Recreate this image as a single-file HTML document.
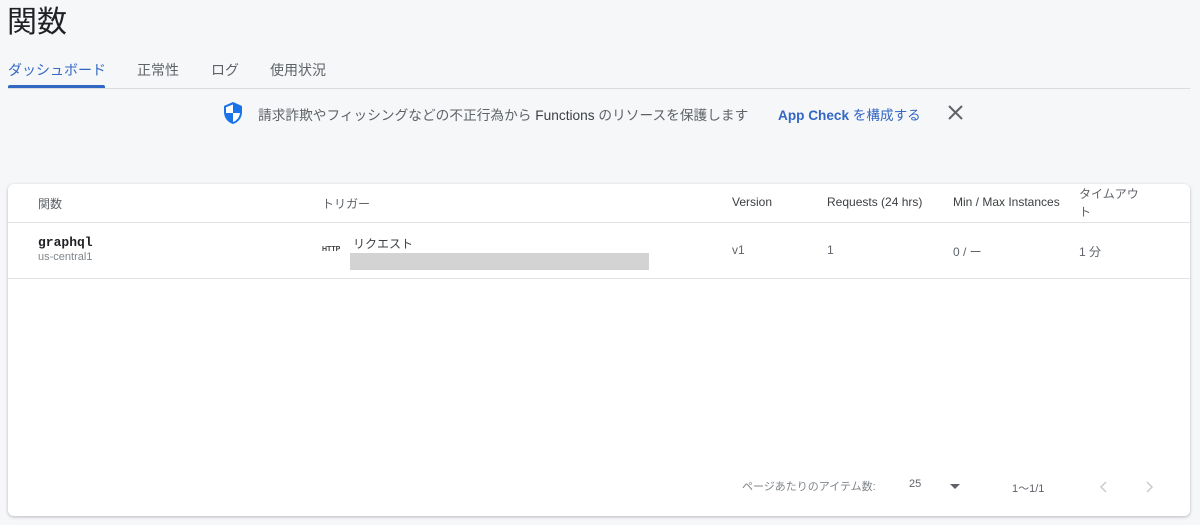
<!DOCTYPE html>
<html><head><meta charset="utf-8"><style>
*{margin:0;padding:0;box-sizing:border-box}
body{width:1200px;height:525px;background:#f6f7f9;font-family:"Liberation Sans","Noto Sans CJK JP",sans-serif;color:#3c4043;position:relative;overflow:hidden}
.a{position:absolute;white-space:nowrap}
</style></head><body>
<div class="a" style="left:7px;top:3px;font-size:30px;color:#202124;line-height:40px">関数</div>
<div class="a" style="left:8px;top:60px;font-size:14px;color:#3367c4">ダッシュボード</div>
<div class="a" style="left:137px;top:60px;font-size:14px;color:#5f6368">正常性</div>
<div class="a" style="left:211px;top:60px;font-size:14px;color:#5f6368">ログ</div>
<div class="a" style="left:270px;top:60px;font-size:14px;color:#5f6368">使用状況</div>
<div class="a" style="left:8px;top:88px;width:1182px;height:1px;background:#dadce0"></div>
<div class="a" style="left:8px;top:85px;width:97px;height:3px;background:#3367c4;border-radius:2px 2px 0 0"></div>
<svg class="a" style="left:222px;top:101px" width="22" height="24" viewBox="0 0 22 24"><path d="M11 1L2 5v6c0 6 4 10.5 9 12 5-1.5 9-6 9-12V5z" fill="#1a73e8"/><path d="M11 3.5v8.5H4V6.3zM11 12h7c-.5 4.5-3.5 7.8-7 9z" fill="#fff"/></svg>
<div class="a" style="left:258px;top:104px;font-size:13.7px;color:#5f6368">請求詐欺やフィッシングなどの不正行為から <span style="color:#3c4043">Functions</span> のリソースを保護します</div>
<div class="a" style="left:778px;top:104px;font-size:13.6px;color:#3367c4"><b style="font-weight:600">App Check</b> を構成する</div>
<svg class="a" style="left:948px;top:105px" width="15" height="15" viewBox="0 0 15 15"><path d="M1 1L14 14M14 1L1 14" stroke="#5f6368" stroke-width="2"/></svg>
<div class="a" style="left:8px;top:184px;width:1182px;height:332px;background:#fff;border-radius:6px;box-shadow:0 1px 3px rgba(0,0,0,.25)"></div>
<div class="a" style="left:8px;top:222px;width:1182px;height:1px;background:#e3e3e3"></div>
<div class="a" style="left:8px;top:278px;width:1182px;height:1px;background:#e3e3e3"></div>
<div class="a" style="left:38px;top:195px;font-size:12px;color:#5f6368">関数</div>
<div class="a" style="left:322px;top:195px;font-size:12px;color:#5f6368">トリガー</div>
<div class="a" style="left:732px;top:195px;font-size:12px;color:#3c4043">Version</div>
<div class="a" style="left:827px;top:195px;font-size:12px;color:#3c4043">Requests (24 hrs)</div>
<div class="a" style="left:953px;top:195px;font-size:12px;color:#3c4043">Min / Max Instances</div>
<div class="a" style="left:1079px;top:185px;font-size:12px;color:#5f6368;line-height:18px;white-space:normal;width:70px">タイムアウト</div>
<div class="a" style="left:38px;top:235px;font-size:13px;font-family:'Liberation Mono',monospace;font-weight:bold;color:#202124">graphql</div>
<div class="a" style="left:38px;top:251px;font-size:11px;color:#80868b">us-central1</div>
<div class="a" style="left:322px;top:246px;font-size:7px;font-weight:bold;color:#3c4043">HTTP</div>
<div class="a" style="left:353px;top:235px;font-size:12px;color:#3c4043">リクエスト</div>
<div class="a" style="left:350px;top:253px;width:299px;height:17px;background:#d3d3d3"></div>
<div class="a" style="left:732px;top:243px;font-size:12px;color:#5f6368">v1</div>
<div class="a" style="left:827px;top:243px;font-size:12px;color:#5f6368">1</div>
<div class="a" style="left:953px;top:243px;font-size:12px;color:#5f6368">0 / ー</div>
<div class="a" style="left:1079px;top:243px;font-size:12px;color:#5f6368">1 分</div>
<div class="a" style="left:742px;top:478px;font-size:11px;color:#80868b">ページあたりのアイテム数:</div>
<div class="a" style="left:909px;top:478px;font-size:11px;color:#5f6368">25</div>
<div class="a" style="left:950px;top:484px;width:0;height:0;border-left:5px solid transparent;border-right:5px solid transparent;border-top:5px solid #5f6368"></div>
<div class="a" style="left:1012px;top:480px;font-size:11px;color:#5f6368">1～1/1</div>
<svg class="a" style="left:1098px;top:480px" width="10" height="14"><path d="M8 2L3 7l5 5" stroke="#ccc" stroke-width="1.5" fill="none"/></svg>
<svg class="a" style="left:1145px;top:480px" width="10" height="14"><path d="M2 2l5 5-5 5" stroke="#ccc" stroke-width="1.5" fill="none"/></svg>
</body></html>
